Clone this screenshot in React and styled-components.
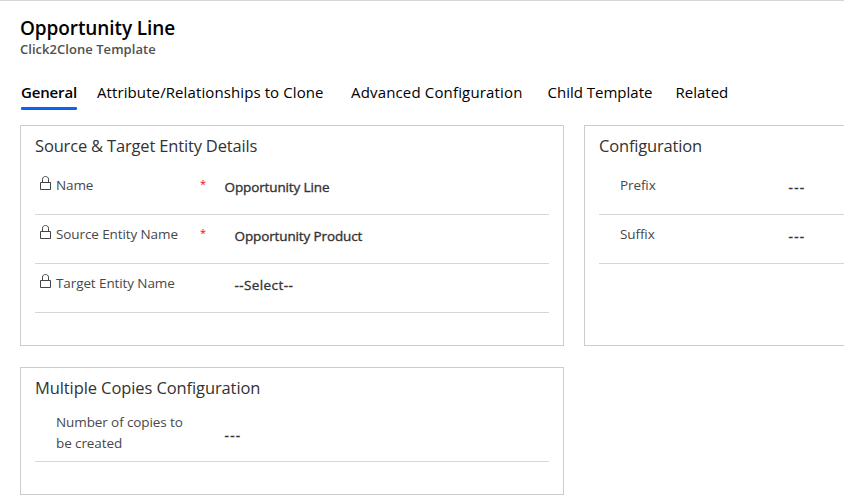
import React from "react";
import styled, { createGlobalStyle } from "styled-components";

const GlobalStyle = createGlobalStyle`
  * { box-sizing: border-box; }
  body {
    margin: 0;
    background: #fff;
    color: #333;
    font-family: "Open Sans", "Noto Sans", sans-serif;
    overflow: hidden;
  }
`;

const Page = styled.main`
  height: 503px;
  overflow: hidden;
  border-top: 1px solid #d6d6d6;
`;

const Header = styled.header`
  padding: 15px 20px 0;
`;

const Title = styled.h1`
  margin: 0;
  font-size: 19px;
  line-height: 24px;
  font-weight: 600;
  letter-spacing: -0.1px;
  color: #000;
`;

const Subtitle = styled.div`
  font-size: 13px;
  line-height: 18px;
  font-weight: 600;
  letter-spacing: 0.04px;
  color: #505050;
`;

const Tabs = styled.nav`
  display: grid;
  grid-template-columns: 76px 254px 196.5px 128px auto;
  height: 67px;
  padding: 22px 0 0 21px;
`;

const Tab = styled.div`
  justify-self: start;
  height: 30px;
  font-size: 15px;
  line-height: 24px;
  white-space: nowrap;
  color: #000;
  font-weight: ${(p) => (p.$active ? 600 : 400)};
  letter-spacing: ${(p) => p.$spacing || 0}px;
`;

const TabMarker = styled.div`
  width: 56px;
  height: 3px;
  margin-top: 3px;
  border-radius: 1px;
  background: #0b63f6;
`;

const Sections = styled.div`
  display: grid;
  grid-template-columns: 544px 544px;
  grid-template-rows: 221px 128px;
  gap: 21px 20px;
  padding-left: 20px;
`;

const Card = styled.section`
  border: 1px solid #ccc;
  padding: 0 14px;
`;

const CardTitle = styled.h2`
  margin: 0;
  height: 40px;
  padding-top: 8px;
  font-size: 16.5px;
  line-height: 24px;
  font-weight: 400;
  letter-spacing: ${(p) => p.$spacing ?? -0.17}px;
  color: #333;
`;

const Field = styled.div`
  display: grid;
  grid-template-columns: 21px 144px 24px 1fr;
  height: ${(p) => (p.$tall ? 54 : 49)}px;
  border-bottom: 1px solid #d6d6d6;
`;

const LockIcon = styled.svg`
  width: 13px;
  height: 16px;
  margin: 9px 0 0 4px;
`;

const Label = styled.div`
  padding-top: ${(p) => (p.$tall ? 4 : 9)}px;
  font-size: 13.5px;
  line-height: 21px;
  letter-spacing: -0.1px;
  color: #484848;
`;

const Required = styled.div`
  padding-top: 8px;
  font-size: 11px;
  line-height: 20px;
  color: #f00;
`;

const Value = styled.div`
  padding: ${(p) => (p.$tall ? 17 : 11)}px 0 0 ${(p) => (p.$inset ? 10.5 : 0.5)}px;
  font-size: 13.5px;
  line-height: 21px;
  font-weight: 500;
  -webkit-text-stroke: 0.35px #333;
  letter-spacing: ${(p) => p.$spacing ?? -0.12}px;
  white-space: nowrap;
  color: #333;
`;

function Lock() {
  return (
    <LockIcon viewBox="0 0 13 16" fill="none" stroke="#444" strokeWidth="1">
      <path d="M1.5 7.5H11.5V14.5H1.5Z" />
      <path d="M3.5 7.5V4.2C3.5 0.6 9.5 0.6 9.5 4.2V7.5" />
    </LockIcon>
  );
}

function FieldRow({ label, value, locked, required, inset, spacing, tall }) {
  return (
    <Field $tall={tall}>
      <div>{locked && <Lock />}</div>
      <Label $tall={tall}>{label}</Label>
      <Required>{required && "*"}</Required>
      <Value $inset={inset} $spacing={spacing} $tall={tall}>{value}</Value>
    </Field>
  );
}

export default function App() {
  return (
    <>
      <GlobalStyle />
      <Page>
        <Header>
          <Title>Opportunity Line</Title>
          <Subtitle>Click2Clone Template</Subtitle>
        </Header>
        <Tabs>
          <Tab $active $spacing={-0.15}>
            General
            <TabMarker />
          </Tab>
          <Tab $spacing={0.1}>Attribute/Relationships to Clone</Tab>
          <Tab $spacing={0.16}>Advanced Configuration</Tab>
          <Tab>Child Template</Tab>
          <Tab>Related</Tab>
        </Tabs>
        <Sections>
          <Card>
            <CardTitle>Source &amp; Target Entity Details</CardTitle>
            <FieldRow label="Name" value="Opportunity Line" locked required />
            <FieldRow label="Source Entity Name" value="Opportunity Product" locked required inset />
            <FieldRow label="Target Entity Name" value="--Select--" locked inset spacing={0.4} />
          </Card>
          <Card>
            <CardTitle>Configuration</CardTitle>
            <FieldRow label="Prefix" value="---" spacing={1.3} />
            <FieldRow label="Suffix" value="---" spacing={1.3} />
          </Card>
          <Card>
            <CardTitle $spacing={-0.1}>Multiple Copies Configuration</CardTitle>
            <FieldRow label="Number of copies to be created" value="---" spacing={1.3} tall />
          </Card>
        </Sections>
      </Page>
    </>
  );
}
